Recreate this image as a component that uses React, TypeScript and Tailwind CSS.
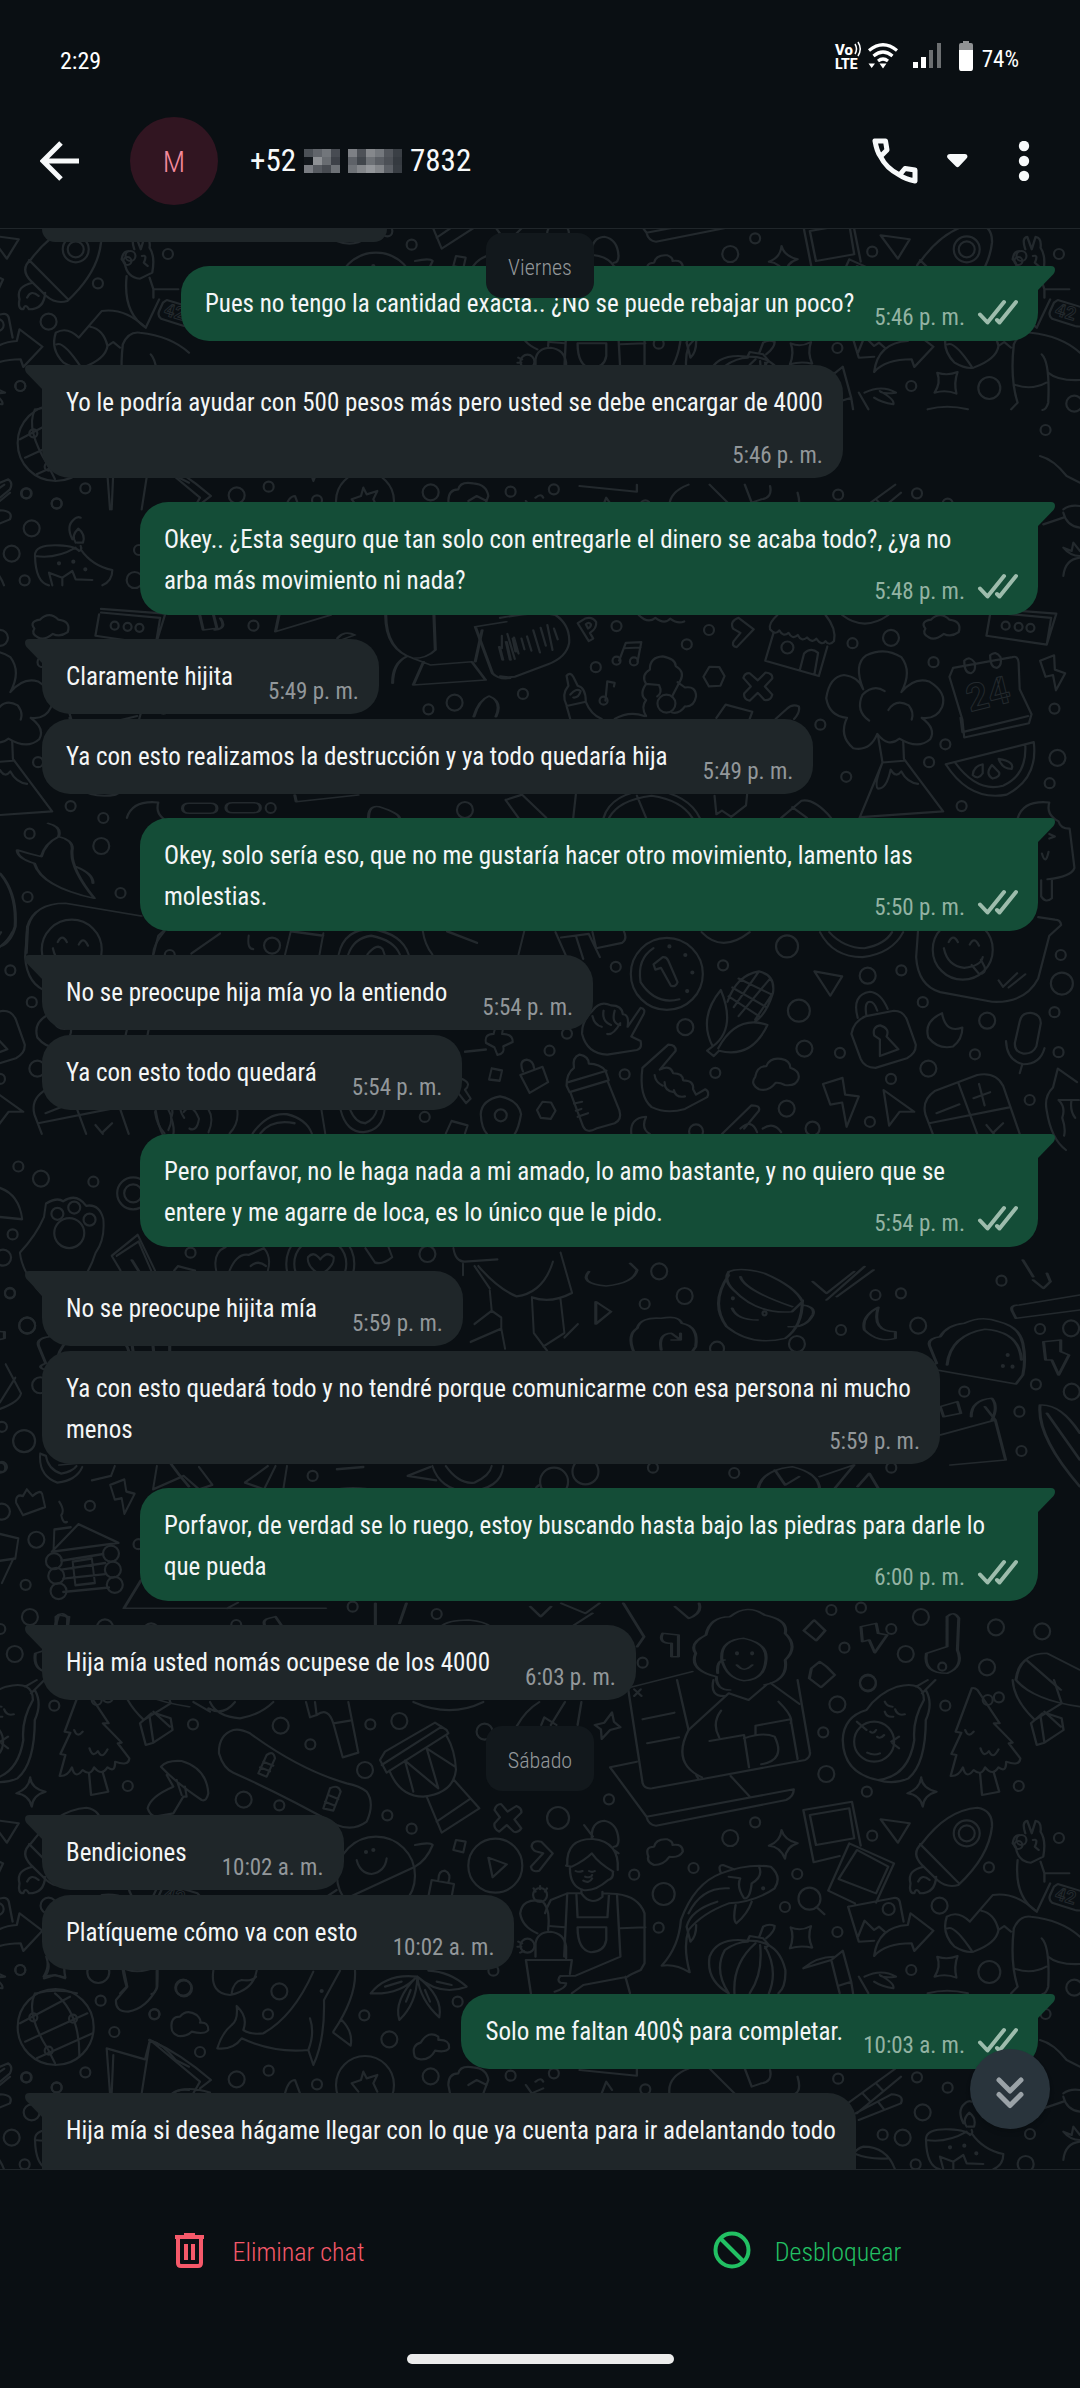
import clsx from 'clsx'

type Message = {
  text: string
  time?: string
  mine?: boolean
  // first message of a run gets the little corner tail
  tail?: boolean
  layout?: 'row' | 'wide' | 'stacked'
}

type Sheet = {
  x: number
  y: number
  sx: number
  sy: number
  paths: string[]
  circles: number[][]
}

const friday: Message[] = [
  { text: 'Pues no tengo la cantidad exacta.. ¿No se puede rebajar un poco?', time: '5:46 p. m.', mine: true, tail: true },
  { text: 'Yo le podría ayudar con 500 pesos más pero usted se debe encargar de 4000', time: '5:46 p. m.', tail: true, layout: 'stacked' },
  { text: 'Okey.. ¿Esta seguro que tan solo con entregarle el dinero se acaba todo?, ¿ya no\narba más movimiento ni nada?', time: '5:48 p. m.', mine: true, tail: true, layout: 'wide' },
  { text: 'Claramente hijita', time: '5:49 p. m.', tail: true },
  { text: 'Ya con esto realizamos la destrucción y ya todo quedaría hija', time: '5:49 p. m.' },
  { text: 'Okey, solo sería eso, que no me gustaría hacer otro movimiento, lamento las\nmolestias.', time: '5:50 p. m.', mine: true, tail: true, layout: 'wide' },
  { text: 'No se preocupe hija mía yo la entiendo', time: '5:54 p. m.', tail: true },
  { text: 'Ya con esto todo quedará', time: '5:54 p. m.' },
  { text: 'Pero porfavor, no le haga nada a mi amado, lo amo bastante, y no quiero que se\nentere y me agarre de loca, es lo único que le pido.', time: '5:54 p. m.', mine: true, tail: true, layout: 'wide' },
  { text: 'No se preocupe hijita mía', time: '5:59 p. m.', tail: true },
  { text: 'Ya con esto quedará todo y no tendré porque comunicarme con esa persona ni mucho\nmenos', time: '5:59 p. m.', layout: 'wide' },
  { text: 'Porfavor, de verdad se lo ruego, estoy buscando hasta bajo las piedras para darle lo\nque pueda', time: '6:00 p. m.', mine: true, tail: true, layout: 'wide' },
  { text: 'Hija mía usted nomás ocupese de los 4000', time: '6:03 p. m.', tail: true },
]

const saturday: Message[] = [
  { text: 'Bendiciones', time: '10:02 a. m.', tail: true },
  { text: 'Platíqueme cómo va con esto', time: '10:02 a. m.' },
  { text: 'Solo me faltan 400$ para completar.', time: '10:03 a. m.', mine: true, tail: true },
  { text: 'Hija mía si desea hágame llegar con lo que ya cuenta para ir adelantando todo', tail: true, layout: 'stacked' },
]

// Wallpaper doodles. Every sheet has its own origin and scale, circles are [x, y, radius].
const sheets: Sheet[] = [
  {
    x: 500, y: 600, sx: 0.3699, sy: 0.35714,
    paths: [
      'M0 50C60 40 110 30 150 42Q190 70 187 120Q180 160 130 180L40 215Q20 218 0 214M5 100V135M20 95l20 70M38 105l12 45M58 108l8 30M73 102l12 40M90 85l18 62M110 78l14 50M128 70l14 70M146 80l10 30',
      'M210 65L240 115L252 108L243 92Q262 80 260 62Q250 45 230 52ZM232 68q8-8 14 0q0 8-8 12z',
      'M322 170L340 120L382 118L372 172M335 135L380 133M285 282L290 228L310 232L308 242',
      'M180 295Q165 265 185 240L180 212Q190 200 198 215L210 240Q232 245 232 285L180 297L190 333M232 285Q245 320 275 333M190 265q15-20 28-10q-5 20-20 18M310 333Q350 310 390 325',
      'M395 235Q380 210 405 195Q405 160 440 158Q475 165 475 185Q500 200 488 225L465 270M395 235L430 238Q440 260 425 270M480 230L500 245Q530 240 530 270Q525 300 500 298Q485 320 465 315M395 235Q375 265 395 280Q380 300 395 325',
      'M566 187L593 188L607 213L596 240L565 242L550 215Z',
      'M675 205L697 225L718 203Q738 205 736 220L716 242L736 265Q732 282 715 280L697 260L675 282Q658 278 660 262L678 242L658 218Q662 204 675 205Z',
      'M640 132Q625 130 632 115L650 92L630 80Q620 60 645 50L686 82ZM585 330L610 293L682 313L675 333M745 333L775 305Q790 290 808 298Q812 315 795 333',
      'M740 90L717 170L862 213L885 130M750 42Q725 65 730 82Q745 100 755 85Q765 105 780 92Q790 112 805 98Q815 118 830 105Q845 122 855 108Q870 130 880 115Q890 130 903 115Q910 80 880 42M810 198L822 150Q840 130 860 148L850 208',
      'M982 250Q955 180 990 155Q1040 130 1085 160Q1115 200 1085 258Q1120 215 1160 228Q1210 260 1195 300Q1180 335 1140 330Q1180 360 1163 390Q1130 420 1080 388Q1050 415 1020 375Q1000 425 955 415Q915 380 938 330Q890 325 882 275Q890 215 930 210Q970 215 982 250M998 338Q960 310 980 265Q1010 235 1040 255M1050 308Q1070 275 1105 295Q1120 315 1113 335',
      'M1022 380L1034 455L972 610M1090 395L1092 445L1198 592L975 608M1034 455L1092 450M1034 455Q1010 520 1022 528Q1045 530 1056 475Q1070 500 1085 480Q1100 510 1130 515',
      'M1225 190L1215 215L1250 335L1255 385L1430 345L1437 320L1405 250L1402 175Q1400 155 1385 160L1225 190M1245 330L1250 370L1428 325M1255 170q15-15 28 5q5 25-10 30q-18 0-18-35M1325 155q15-15 28 5q5 25-10 30q-18 0-18-35',
      'M1460 170L1498 155L1500 195L1528 205L1503 253L1495 210L1475 215Z',
      'M1205 460L1443 398Q1455 500 1370 545Q1270 565 1205 460ZM1230 455Q1290 540 1360 520Q1425 490 1420 405M1305 460q-25 5-27 30q15 15 27-5zM1330 462q-20 25 2 38q22-5 17-18zM1348 445q10 28 35 28q10-20-35-28z',
      'M1150 80Q1135 60 1165 55Q1190 30 1215 55Q1250 60 1240 90Q1220 105 1200 95Q1175 115 1160 105Q1140 95 1150 80',
      'M1325 40L1315 100L1478 125L1504 38L1330 25M1478 125L1490 50L1330 35M925 42Q985 90 1050 42M375 42Q400 68 420 50Q445 70 460 52Q480 68 498 60',
      'M15 560L60 545L125 610M15 560L50 610M205 545L198 610M280 610Q300 540 410 530Q510 545 540 610M295 610Q320 560 410 548Q490 560 520 610M370 548L395 610M580 548L585 600L600 590L625 607L665 575L668 545M760 610L815 562Q850 555 895 610M790 580L830 610',
      'M1400 610Q1415 560 1485 567Q1475 600 1510 620Q1515 640 1540 640L1553 750Q1545 775 1480 782M1463 785V830Q1475 850 1492 835V785M1485 655L1500 662L1485 668M1465 710Q1475 745 1483 705',
      'M1130 927L1125 1000Q1130 1080 1190 1098L1330 1125Q1420 1130 1455 1060L1485 940L1517 910Q1515 895 1500 895L1455 888M1213 958q12-25 25 0M1270 965q12-25 25 3M1200 975Q1210 1025 1255 1030Q1300 1025 1305 1000M1275 1022l20 25q20 0 15-20l-10-20M1348 1065L1360 1083L1398 1045M1375 1085L1420 1048',
      'M415 975Q370 1005 380 1070Q420 1135 485 1118M415 1020L440 1000Q450 998 455 1010L480 1070Q475 1085 462 1080L435 1030L420 1035Z',
      'M150 930L180 1000M165 945L240 935L270 1000M205 940L225 1005M250 930L260 975L330 960Q345 950 335 928M545 930Q600 990 675 930M865 930Q900 1000 980 1000Q1060 990 1090 930M890 930Q930 975 985 975Q1040 965 1060 930',
      'M597 1092Q535 1170 575 1250Q640 1200 597 1092M575 1250L560 1262L578 1277L592 1262M592 1262Q680 1285 723 1190Q640 1160 590 1255M615 1125Q640 1050 700 1040Q745 1050 738 1100Q720 1160 690 1180M645 1060L735 1105M628 1085L720 1140M618 1110L700 1165M700 1040L632 1140M730 1060L645 1165M738 1100L690 1175',
      'M850 1040L925 1054L893 1108ZM1037 1372L1120 1433L1080 1433L1052 1472Z',
      'M990 1165L1065 1150Q1090 1150 1100 1175L1124 1245Q1125 1270 1100 1283L1015 1310Q985 1310 975 1285L950 1215Q955 1180 990 1165ZM967 1170Q950 1105 1000 1097Q1030 1100 1048 1145M990 1160Q985 1125 1000 1125Q1012 1125 1020 1150M1012 1220Q1005 1195 1028 1191Q1055 1200 1045 1222L1077 1258L1027 1277L1027 1230Z',
      'M1195 1157Q1145 1180 1158 1225Q1185 1260 1225 1250Q1250 1230 1250 1197Q1205 1215 1195 1157Z',
      'M1405 1180Q1410 1155 1435 1156Q1462 1160 1462 1185L1450 1250Q1440 1272 1415 1270Q1390 1265 1392 1240ZM1368 1235Q1370 1290 1415 1300Q1460 1300 1472 1255M1412 1300L1405 1325',
      'M250 1150Q270 1120 300 1135Q330 1135 332 1160Q350 1160 345 1195L380 1142Q395 1145 388 1160L355 1222L380 1235Q385 1255 370 1260L290 1273Q235 1270 222 1215Q220 1180 250 1150M250 1165Q255 1190 275 1195M280 1150Q275 1180 300 1190M310 1150Q300 1185 325 1190M290 1215Q305 1220 325 1185',
      'M385 1310L455 1245Q475 1245 475 1262L432 1315Q460 1300 468 1325Q495 1325 495 1345Q525 1345 522 1370L530 1385L555 1370Q568 1378 560 1392L500 1425Q450 1440 410 1420Q375 1390 385 1310M418 1330Q420 1350 440 1360M445 1350Q445 1375 470 1378M470 1372Q475 1395 500 1390',
      'M690 1335Q695 1305 720 1305Q730 1280 760 1285Q785 1290 785 1310Q812 1320 807 1340Q800 1362 770 1358Q755 1350 745 1352Q725 1378 700 1370Q675 1355 690 1335Z',
      'M873 1355L926 1338L933 1385L970 1390L937 1475L925 1407L893 1413Z',
      'M200 1310Q195 1280 215 1273Q240 1278 240 1298Q270 1298 285 1318L294 1345L188 1378L180 1360Q180 1325 200 1310M185 1350L288 1318M190 1378L225 1475Q235 1495 260 1480L310 1465Q330 1455 323 1430L292 1350M200 1410l22-5M205 1430l15-5M210 1447l28-10',
      'M55 1330L115 1307L130 1350L80 1380ZM62 1320Q50 1290 72 1287Q90 1290 92 1310M115 1405L138 1407L150 1430L137 1453L110 1450L100 1428ZM0 1390Q50 1400 57 1440Q50 1480 40 1495M0 1390Q-50 1400 -52 1440Q-50 1480 -35 1495',
      'M1150 1440Q1140 1400 1175 1375L1290 1330Q1340 1320 1360 1360L1405 1495M1150 1440L1170 1495M1240 1355L1290 1495M1160 1465L1380 1420M1180 1437L1242 1412M1280 1395L1325 1378M1295 1355L1310 1415M1335 1490L1360 1465M1315 1470L1335 1495',
      'M1530 1540Q1490 1510 1478 1430Q1470 1390 1495 1365L1508 1312L1560 1350M1510 1400Q1530 1420 1520 1450Q1530 1480 1525 1500M1510 1400L1565 1400M1545 1400Q1540 1430 1555 1450',
      'M355 1495Q350 1450 395 1447Q380 1480 405 1495M600 1495L680 1415Q705 1415 700 1430L660 1480M650 1480Q680 1450 695 1490M710 1480Q740 1460 760 1490',
    ],
    circles: [
      [315, 73, 5], [565, 84, 5], [505, 124, 5], [259, 188, 5], [62, 263, 5], [953, 121, 5], [1172, 174, 5], [866, 349, 5], [1204, 404, 5], [1160, 454, 5], [936, 495, 5], [1499, 304, 5], [1486, 513, 5], [1248, 577, 5],
      [603, 1023, 5], [313, 1027, 5], [181, 1214, 5], [134, 1262, 5], [337, 1328, 5], [582, 1324, 5], [919, 1268, 5], [1085, 1037, 5], [1143, 1126, 5], [1284, 1272, 5], [1057, 1341, 5], [1000, 1461, 5], [1432, 1400, 5], [1499, 1154, 5], [1510, 1266, 5], [1516, 994, 5],
      [1057, 106, 8], [501, 1196, 8], [776, 970, 11], [808, 1150, 11], [823, 1256, 8], [994, 1052, 8], [1317, 1178, 8], [1158, 1312, 8], [775, 1424, 8], [1507, 442, 8], [1519, 1074, 11], [845, 1480, 7], [530, 1488, 7],
      [315, 170, 4], [362, 172, 4], [280, 282, 4], [450, 290, 9], [777, 133, 6], [1367, 72, 4], [1402, 75, 4], [1434, 78, 4], [1251, 979, 30], [451, 1047, 36], [458, 970, 1], [501, 994, 1], [520, 1043, 1], [506, 1095, 1], [2, 1443, 6],
    ],
  },
  {
    x: 480, y: 1680, sx: 0.38265, sy: 0.33333,
    paths: [
      'M55 372L72 395L95 378Q110 385 108 398L90 418L108 445Q100 460 88 455L70 435L50 455Q35 445 38 430L52 412L38 390Q42 372 55 372Z',
      'M345 97L350 125L367 142L340 150L318 177L316 148L300 135L325 128ZM1153 292Q1155 325 1193 335Q1160 345 1157 380Q1150 345 1117 340Q1150 325 1153 292ZM788 450Q795 480 830 490Q800 500 797 536Q785 500 755 497Q785 485 788 450Z',
      'M812 742Q838 755 865 738Q855 770 868 803Q838 795 810 805Q822 770 812 742ZM1195 830Q1222 840 1248 828Q1238 860 1245 893Q1218 880 1188 890Q1205 860 1195 830Z',
      'M385 10L425 310Q430 328 450 325L850 240Q865 230 862 215L830 0M515 0L545 150M565 285L570 295M340 262L410 245M340 262L435 410L820 328M435 410Q440 435 460 437L800 360Q820 350 820 328M655 288L705 350M425 118L508 98M437 190L520 172M403 28L422 48M420 28L403 48',
      'M650 40L545 150Q500 250 580 292M630 92Q605 130 625 172M600 183L690 165L703 262M720 165V137L812 118L830 237M690 175Q740 155 770 170Q800 240 735 253M780 65Q820 110 812 130M610 0Q600 50 640 48M650 40L702 60L748 15M760 10L835 72',
      'M95 140Q120 90 155 66M185 135L222 66M160 135L168 112L200 135M255 135L265 66',
      'M1090 20Q1160 0 1160 60Q1130 120 1135 180Q1120 290 1040 300Q950 280 948 180Q950 110 1010 90Q1040 40 1090 20ZM1165 30Q1185 70 1165 120Q1165 250 1120 295Q1080 315 1040 300M1012 218Q1030 228 1045 220M1020 155q8 8 15-5M1038 170q8 8 18-5M1075 185L1095 170M1078 190L1095 205M985 125L1010 150M1058 65q5 15 20 15M1085 88q5 20 25 15M1058 95q5 18 22 15M1140 20L1170 0M1155 40L1190 0',
      'M1285 25L1243 155L1258 158L1232 222L1245 225L1230 288Q1250 290 1262 262Q1270 300 1290 270Q1310 290 1320 262Q1340 290 1355 262Q1375 280 1375 245Q1410 260 1412 235L1382 190L1392 188L1343 130L1358 130L1300 30Q1292 22 1285 25M1307 282L1312 345L1357 335L1342 275M1268 150q8 25 22 5M1308 205q8 30 22 8q10 28 25-5',
      'M1392 0Q1395 60 1450 120L1520 70L1500 0M1440 130L1455 195L1475 188L1525 150L1520 115L1480 100M1440 130L1470 100M1465 110L1475 188M1475 95L1518 140',
      'M845 390L972 365L995 497M845 390L872 547L940 528M862 405L965 385L978 475L878 495ZM965 490L1082 550L1035 668M965 490L910 632L980 670M985 510L1067 560L1035 640L937 597ZM962 680L1085 653Q1095 655 1097 665L1107 725M962 680L990 785L1030 782M988 770L1005 722L1030 750L1043 740L1058 755',
      'M1125 700L1185 752L1135 813L1128 790Q1060 790 1030 828Q1040 740 1118 735L1125 700ZM1047 418L1123 430L1092 488Z',
      'M1155 490Q1220 390 1300 383Q1340 390 1338 440Q1330 530 1250 615Q1220 625 1195 600L1155 555Q1125 520 1155 490M1150 492L1250 608M1160 560Q1115 570 1125 610Q1120 640 1135 640Q1140 620 1150 640Q1190 640 1192 590M1145 605Q1155 580 1175 600',
      'M1425 460Q1415 425 1430 422L1442 460L1452 422Q1468 425 1465 455Q1480 480 1472 530L1440 548Q1405 545 1400 500L1392 490Q1395 465 1410 465M1445 480Q1460 475 1450 500L1460 510M1405 540Q1395 650 1455 695L1490 610M1465 545L1475 580L1475 605M1475 580L1540 580M1510 612L1590 640Q1600 650 1595 665L1585 685Q1570 695 1555 690L1495 668Q1485 660 1490 645L1500 620Z',
      'M1280 725L1340 645Q1400 635 1455 695M1280 725Q1250 690 1220 710Q1205 760 1240 800Q1270 820 1290 815Q1350 790 1355 750Q1345 700 1310 692M1222 745Q1240 735 1285 812M1355 750L1370 738L1388 755M1395 745Q1410 705 1440 710Q1520 720 1568 770M1395 745Q1385 850 1405 920L1388 940M1485 830Q1510 855 1568 852M1395 865Q1440 885 1480 860M1468 775Q1490 800 1485 920Q1480 940 1470 942',
      'M228 555Q225 475 295 477Q365 485 360 570M225 557L240 560Q275 540 292 520Q310 550 348 575M292 475Q290 425 325 422Q360 430 362 480Q362 500 350 500M272 435L295 470M350 510L362 520M235 565Q235 620 270 630Q300 635 335 600Q350 595 347 575M250 573q8 5 18 0M285 573q8 5 15 0M275 590q15 5 18-5M270 602Q285 612 293 595',
      'M265 632V640L228 640L185 660Q175 680 170 700M228 640L220 830M265 640Q290 680 320 650V635M320 640L358 642Q415 650 430 700V850L420 870Q390 885 385 890L270 915L240 940M252 645L255 712H333L337 645M358 642L367 830L250 887L210 888Q200 900 210 908L225 910Q225 925 195 935M367 745L432 742M180 738L222 742M255 742H330V780Q325 815 290 817Q255 810 255 742M380 890L392 940',
      'M145 830V790Q150 755 185 755Q220 760 225 800V835M120 840H240L235 882M120 840L133 940M178 750Q185 680 160 662Q110 655 105 700Q110 740 150 760M140 625l5 10M157 618v10M175 625l-5 10M100 785l10 5M98 800h10M105 818l10-5M880 682L900 703',
      'M475 857Q520 800 525 720Q560 610 630 580Q700 550 760 560Q790 590 770 625Q720 665 650 670Q580 700 545 750Q530 800 548 877Q510 850 475 857M630 580Q620 555 635 555L665 568M730 562Q740 590 710 610Q705 660 690 655Q670 620 680 595Q650 590 650 590M650 625Q580 620 545 700M620 665Q550 690 540 740L550 785Q565 770 565 735M668 675Q660 720 670 730Q700 700 710 665',
      'M650 940Q590 900 600 830Q620 770 700 782Q780 780 798 870Q800 920 780 940M650 940Q610 870 640 810Q670 785 700 785M665 940Q660 850 720 790M705 940Q740 880 732 795M755 940Q780 870 745 800M700 780L705 768L740 775L755 795L745 805M730 770L740 740Q755 730 770 738Q770 755 748 775',
      'M440 530Q430 500 455 500Q460 475 490 478Q505 485 503 495Q530 490 530 515Q520 535 495 530Q480 555 455 555Q435 545 440 530ZM22 533L70 553L33 592ZM135 500Q135 480 160 485L190 520L155 572Q135 578 133 560L165 520L150 515Q140 515 135 500',
      'M845 865L918 840L948 812L970 905L935 918L918 840M845 865Q880 830 925 830M935 918L940 940M970 905L975 940M990 890L1015 940M1005 890Q1050 865 1087 890Q1050 895 1045 885Q1085 910 1080 925Q1050 920 1030 905M1170 940Q1220 925 1275 940',
      'M495 1240Q490 1190 545 1166M600 1166L665 1240M692 1166L710 1220L735 1210M758 1170Q765 1205 735 1210M830 1190Q840 1230 825 1240M955 1275L1085 1166M985 1300L1100 1190M1000 1240l20 25M1035 1210l18 22M965 1310L1075 1243Q1110 1245 1100 1270L990 1320M1040 1265l15 22M260 1170L410 1187V1166M318 1240L330 1205L345 1230M120 1215L135 1240L165 1225M145 1205Q160 1190 165 1205',
    ],
    circles: [
      [897, 157, 5], [1216, 77, 5], [1356, 52, 5], [1011, 335, 5], [337, 358, 5], [719, 427, 5], [403, 584, 5], [558, 564, 5], [829, 582, 5], [797, 681, 5], [467, 743, 5], [1025, 467, 5], [934, 756, 5], [1127, 870, 5], [35, 872, 5], [1408, 318, 5], [1330, 562, 5], [1513, 474, 5], [80, 1187, 5], [193, 1180, 5], [432, 1228, 5], [936, 1196, 5], [1478, 1002, 5],
      [934, 73, 8], [905, 282, 8], [204, 414, 11], [654, 474, 8], [480, 642, 11], [1201, 677, 8], [1331, 876, 11], [1553, 923, 8], [1014, 10, 8], [1068, 687, 6], [1030, 185, 20], [1272, 460, 13], [1272, 460, 8], [1415, 480, 5], [1407, 495, 4], [157, 645, 7], [124, 797, 7], [861, 656, 11], [40, 557, 27], [740, 625, 1], [12, 155, 8],
    ],
  },
  {
    x: 0, y: 1680, sx: 0.33333, sy: 0.33333,
    paths: [
      'M483 260Q500 240 545 243Q620 265 625 340Q620 365 605 360Q530 310 483 260M500 285L520 320Q450 350 443 385Q450 405 465 410L520 400L550 350L560 350L555 320M530 300L545 345',
      'M700 150Q655 165 657 220Q670 265 700 278Q860 350 1010 435Q1060 455 1100 425Q1125 370 1100 335Q1080 318 1040 310Q900 270 750 160Q720 145 700 150ZM775 280L800 225Q820 210 825 235L800 290ZM790 245l30 12M780 262l30 12M970 385L990 325Q1015 312 1022 335L1000 392ZM985 345l30 12M975 365l30 12',
      'M918 66L930 112L950 105L945 66M950 105Q985 80 1000 130L1028 232L1075 218L1045 66M1000 130L1050 122M580 66L630 95M630 66Q650 110 720 115Q780 105 820 66M625 85Q670 110 705 66M1240 66Q1350 115 1450 66',
      'M1140 240L1155 215L1305 128L1340 150L1345 160L1160 278ZM1145 255L1325 140M1168 272Q1200 350 1270 350Q1360 340 1368 270Q1365 210 1340 168M1215 242L1240 335M1215 242L1315 325L1280 205L1365 260M1280 350L1325 458L1438 385L1362 300M1310 425L1408 358',
      'M1245 495Q1290 485 1298 495Q1280 540 1245 560L1050 650M1010 630L980 650M1070 540Q1080 580 1115 582Q1155 575 1160 535M1368 480L1397 485L1390 517L1360 510ZM1285 650L1295 600L1362 612L1355 650M1315 600Q1315 572 1335 572Q1355 580 1345 608',
      'M60 1030L210 950M75 1085L262 1000M110 1135L278 1060M105 940Q75 1000 145 1110L165 1150M165 940Q240 1000 238 1130',
      'M372 872L382 920L348 960Q345 995 385 995Q440 985 470 925V872M132 895Q150 870 145 850M132 895L165 885L195 895M640 872Q630 940 690 945Q760 930 770 872M695 940Q700 905 725 900Q755 905 768 890',
      'M940 875Q880 1010 790 1060Q750 1065 730 1050Q745 1010 710 978Q715 1020 695 1035Q665 1060 652 1105Q700 1110 725 1075Q820 1120 925 1110M930 1015Q945 1060 925 1110L940 1155Q975 1080 972 960L1020 872M1065 872Q1070 950 1000 1055M1025 1020Q1060 1055 1052 1097L1000 1058',
      'M515 1045Q510 1010 540 1010Q560 985 590 1005Q605 1020 600 1028Q625 1025 625 1050Q615 1065 575 1055Q560 1070 535 1068Q515 1060 515 1045ZM1243 1125Q1235 1095 1262 1088Q1285 1050 1315 1070V1080Q1350 1078 1347 1105Q1340 1118 1305 1112Q1290 1140 1262 1138Q1243 1135 1243 1125Z',
      'M1250 890Q1160 880 1112 940Q1200 945 1250 890Q1180 960 1198 1020Q1250 970 1252 890Q1260 960 1318 1012Q1330 950 1252 890Q1320 950 1400 920Q1350 875 1285 872M1155 920L1205 905M1218 965L1232 930M1290 965L1275 930M1310 905L1355 915',
      'M320 1105L330 1240M320 1105L435 1138L450 1080L425 1240M340 1125L335 1240M450 1080L600 1205L580 1240M450 1080Q540 1120 633 1200L600 1225M518 1240Q560 1215 630 1238M1090 1175L1100 1195L1132 1185L1120 1210L1132 1235M1090 1175L1083 1200L1055 1210L1075 1235',
      'M1345 1215Q1345 1180 1375 1180Q1380 1155 1420 1162Q1460 1165 1465 1200L1450 1240M1350 1240L1345 1215M1405 1215L1430 1200L1460 1215M855 1240Q865 1200 885 1200L900 1240M0 1160L25 1150Q40 1160 30 1180L0 1205',
    ],
    circles: [
      [579, 133, 5], [931, 193, 5], [1111, 133, 5], [838, 376, 5], [1162, 406, 5], [1235, 446, 5], [302, 962, 5], [463, 1003, 5], [343, 1056, 5], [256, 1177, 5], [170, 1222, 5], [80, 1192, 5], [600, 1116, 5], [804, 1003, 5], [806, 1172, 5], [1093, 1006, 5], [1373, 965, 5], [951, 1213, 5], [61, 870, 5],
      [842, 137, 8], [1095, 270, 8], [731, 359, 8], [1198, 123, 8], [552, 925, 8], [838, 934, 8], [1168, 1078, 8], [710, 1198, 8], [1292, 1189, 8], [1128, 587, 39], [1098, 516, 1], [1120, 510, 1], [167, 1041, 38], [100, 1012, 4], [219, 1016, 4], [146, 1112, 4], [965, 933, 1], [1095, 1215, 29],
    ],
  },
  {
    x: 0, y: 900, sx: 0.38265, sy: 0.44643,
    paths: [
      'M1285 377L1312 382L1306 405L1278 402ZM1270 320Q1265 300 1290 300Q1295 275 1315 285L1312 300Q1340 300 1340 318L1315 328Q1320 345 1300 347L1292 330Z',
      'M430 70Q400 100 400 122M500 120L575 75M650 80q-5 30 12 30M760 70L745 122M845 75L835 122M760 70L845 80M885 122Q900 65 970 65Q1050 75 1068 122M910 122Q925 85 970 80Q1030 90 1045 122M960 122Q985 95 1000 110L1005 122M1105 70Q1110 100 1130 122M1168 70L1247 96M1370 70L1355 122',
      'M405 475Q410 505 430 523M440 470Q455 490 440 515M480 475Q500 450 520 490Q515 520 495 512M545 470Q560 490 545 520M620 470Q625 500 600 523M660 523Q700 475 750 480Q800 490 815 523M680 523Q710 490 770 500M840 470L850 523M890 470Q905 520 950 520Q1000 515 1005 470M915 470Q930 500 955 500Q980 490 985 470M1165 523L1180 495L1222 505L1215 523M1215 340L1270 335M1205 400q30 10 10 25l15 20l-12 10l-18-20',
      'M115 710Q95 750 52 790Q60 850 146 914Q225 860 250 790M115 710L120 680Q150 665 165 675Q200 655 225 685Q260 680 270 715Q275 760 250 790',
      'M0 645Q50 660 58 715L0 710M292 797L360 750L405 830M305 797L362 765L395 830M292 797L315 830',
      'M565 830Q555 790 590 777M600 830Q620 790 650 795L690 780Q710 800 700 830M655 820q20-15 40 0M455 830L465 820L510 830M837 840Q800 820 805 800Q820 785 837 805Q855 785 872 800Q875 820 837 840M955 780L980 812Q1000 818 1025 800L1015 777',
      'M1185 780Q1190 810 1215 810L1300 805M1210 815L1210 840M1250 820Q1300 870 1350 888Q1420 880 1445 810M1240 820L1280 870M1465 790L1495 880Q1440 905 1390 890L1395 970L1430 1010M1465 895L1475 970L1420 1000M1280 875L1285 920L1240 950M1285 920L1310 935L1310 960L1230 990M1310 960L1320 1005M1510 950L1475 980',
      'M15 1040L55 1105Q50 1125 0 1140M0 1125L40 1070M105 1240Q100 1290 150 1305Q200 1300 215 1270M105 1240L120 1245Q125 1275 160 1285Q190 1280 200 1268M240 1300L290 1290L300 1268',
      'M410 1268L400 1320L480 1290M480 1290L520 1320L555 1310L520 1270M640 1305L700 1268M640 1305L690 1320L720 1268M750 1268L740 1322M880 1275L950 1270M1065 1290L1125 1270M1065 1290L1140 1300M1130 1268Q1150 1320 1220 1325Q1310 1320 1315 1268M1165 1268Q1200 1310 1240 1305Q1280 1290 1285 1268M1410 1310q-20 10 0 15M860 1325Q920 1310 990 1325',
      'M288 1310L325 1298L330 1325L352 1330L325 1375L318 1340L300 1343ZM42 1350Q40 1330 60 1335L70 1320L85 1335Q105 1320 110 1330L118 1360L60 1378Z',
      'M205 1398L135 1460L310 1440ZM140 1455L142 1410L185 1405M155 1348q15 20 5 30q5 20 15 15M160 1480L270 1465M160 1500L275 1485M165 1520L275 1510M165 1550L285 1540M190 1482L240 1475L248 1530L197 1535ZM0 1420L48 1430L40 1475L0 1480M35 1475L5 1530',
    ],
    circles: [
      [711, 102, 8], [1110, 486, 5], [48, 597, 5], [107, 624, 8], [244, 631, 5], [33, 749, 5], [8, 801, 8], [26, 880, 5], [71, 953, 8], [348, 657, 16], [348, 657, 9], [150, 703, 6], [194, 689, 6], [234, 716, 6], [181, 746, 15],
      [498, 790, 5], [837, 815, 34], [837, 815, 26], [1117, 793, 8], [105, 1087, 8], [5, 1180, 5], [63, 1212, 11], [5, 1270, 5], [817, 1290, 5], [1448, 1303, 14], [1530, 1280, 13], [235, 1357, 5], [95, 1433, 8], [362, 1443, 5], [67, 1534, 5], [5, 1370, 8],
      [141, 1481, 8], [147, 1514, 8], [153, 1548, 8], [290, 1464, 8], [295, 1500, 8], [300, 1534, 8],
    ],
  },
  {
    x: 0, y: 340, sx: 0.68878, sy: 0.33333,
    paths: [
      'M290 825L295 870L315 865L310 825M320 835q10 30-8 35M400 875L480 825M405 825L400 875M560 825Q560 930 600 955Q620 955 632 930L630 825M600 955L625 975L685 965L705 1020L600 1035L615 965M570 1030Q570 970 590 950M490 895Q500 870 515 885L495 900M700 870L690 965',
      'M690 860L735 845M690 860L715 1000Q725 1020 740 1015M725 920l5 40M735 905l6 55M745 895l4 40M688 1130Q695 1080 710 1068Q730 1085 720 1130',
      'M275 1390h30q10 0 10 15t-10 15h-30q-10 0-10-15t10-15M338 1388h30q10 0 10 15t-10 15h-30q-10 0-10-15t10-15M430 1385L520 1365M430 1385L428 1365M535 1435Q535 1395 550 1400Q580 1420 580 1435',
    ],
    circles: [[368, 857, 5], [622, 1108, 5], [660, 1088, 8], [393, 1404, 5], [675, 1410, 8]],
  },
  {
    x: 0, y: 800, sx: 0.68878, sy: 0.33333,
    paths: [
      'M70 70Q90 80 85 110Q105 120 105 145Q100 200 137 295Q60 260 50 190Q25 175 25 150Q40 160 60 170Q65 130 85 110M110 200Q135 220 135 250M0 220Q25 280 22 380Q15 430 0 440M38 460L40 380Q50 310 95 310L205 348',
    ],
    circles: [[43, 101, 5], [150, 54, 5], [147, 138, 8], [175, 279, 5], [40, 291, 5]],
  },
  {
    x: 0, y: 1260, sx: 0.68878, sy: 0.33333,
    paths: [
      'M855 35Q840 70 880 78Q920 70 925 30L915 10M865 125L887 155L865 192Z',
      'M1058 35Q1075 20 1110 40Q1155 80 1165 125L1150 155Q1100 165 1065 90Q1050 60 1058 35M1058 45Q1030 130 1055 200Q1090 260 1140 235Q1165 200 1165 120M1165 135Q1185 140 1180 165Q1170 205 1145 200M1063 145Q1070 180 1100 180M1075 50Q1080 90 1150 140',
      'M1180 65L1200 100L1240 35M1215 110L1268 30M1200 120L1255 20M1275 142Q1250 170 1255 210Q1275 250 1300 235V215Q1265 215 1275 142Z',
      'M1485 0L1500 50M1500 60L1515 85L1525 65L1520 40M1470 155Q1465 135 1480 135L1568 105M1475 175L1568 150M1470 155L1475 175',
      'M1360 330Q1345 320 1360 310L1350 260Q1345 235 1365 230Q1375 195 1400 190Q1425 165 1450 185Q1480 200 1485 250Q1490 300 1485 345L1475 372L1360 330M1375 315Q1380 225 1430 208Q1480 215 1483 300M1515 245L1540 240V275L1552 285L1537 345L1527 300L1518 300Z',
      'M920 275Q910 225 925 205Q930 170 960 175Q985 165 990 190Q1015 200 1010 260L1005 275M960 270Q955 220 975 220L988 240M988 220V240H975',
      'M1365 525L1445 480L1460 600L1380 615M1445 480L1430 440M1365 440L1390 425L1395 460L1370 470ZM1410 470Q1410 420 1440 415Q1450 440 1440 480M1510 435Q1540 430 1568 520M1510 435Q1505 530 1568 680M1520 460L1568 600',
      'M1100 690Q1105 630 1150 620Q1190 640 1190 690M1125 630L1140 675L1160 650M1190 650L1240 615L1210 690M1245 680L1262 640L1275 685',
      'M180 1045L473 1045M180 1045L205 960M330 1045L345 1028M545 1100V1030M580 1090L590 1030M640 1100Q650 1080 680 1080Q705 1085 712 1100M770 1040L785 1070L800 1040M815 1030L850 1060L870 1030M830 1100L860 1060M905 1030L920 1080L935 1130L925 1160M980 1040L1000 1075Q1020 1060 1015 1030M80 1100L85 1065L100 1070L98 1100M385 1100Q380 1080 390 1075L400 1070L410 1100',
      'M1375 1070Q1385 1050 1392 1075L1390 1170Q1400 1220 1375 1240Q1340 1240 1345 1180L1375 1160ZM1182 1080L1198 1112L1185 1142L1167 1112ZM1250 1100L1272 1090L1275 1120L1288 1125L1270 1178L1262 1140L1252 1145ZM1178 1225L1190 1205L1200 1220L1212 1245L1192 1282L1175 1255Z',
      'M1010 1180Q1000 1150 1025 1125Q1030 1070 1060 1070Q1085 1030 1110 1065Q1145 1080 1140 1120Q1160 1160 1140 1200Q1145 1260 1110 1275M1010 1180Q1000 1230 1040 1250Q1040 1290 1060 1290M1048 1200Q1045 1140 1080 1135Q1115 1150 1112 1200Q1110 1260 1080 1262Q1055 1255 1048 1200ZM1070 1215q10 25 22 0M1052 1200Q1040 1200 1042 1240M915 1282L1005 1235',
      'M962 1120L985 1125L985 1190L975 1190L975 1150Q955 1150 962 1120M1475 1260Q1480 1180 1520 1180L1568 1230M1490 1200L1540 1290M1475 1260Q1500 1320 1568 1340',
    ],
    circles: [
      [957, 34, 8], [994, 108, 8], [936, 132, 5], [1041, 266, 7], [1157, 252, 8], [1064, 115, 1], [1110, 160, 2], [1271, 105, 5], [1308, 100, 5], [1221, 210, 5], [1333, 197, 8], [1454, 62, 5], [1480, 455, 5], [1510, 207, 5], [1555, 205, 8], [1504, 373, 5], [1556, 395, 8], [1400, 395, 5], [1483, 573, 5],
      [1463, 285, 1], [1456, 318, 1], [1470, 320, 1], [948, 623, 5], [1066, 639, 5], [1294, 623, 5], [512, 1040, 5], [634, 1062, 5], [1337, 1071, 8], [1294, 1107, 5], [1226, 1163, 5], [1207, 1050, 5], [1250, 1043, 5], [1446, 1102, 8], [1513, 1114, 8], [1315, 1182, 8], [1260, 1268, 8], [1433, 1222, 8], [1434, 1320, 5], [933, 1208, 5], [343, 1095, 5], [1368, 1220, 4], [1070, 1180, 1], [1092, 1180, 1],
    ],
  },
  {
    x: 840, y: 1960, sx: 0.33333, sy: 0.33333,
    paths: [
      'M258 540Q255 505 330 508Q380 510 390 525Q400 520 395 510M258 540Q320 550 380 515M258 540Q260 620 300 628M490 582Q490 615 460 628M490 582Q430 570 395 520M370 490Q350 450 375 430Q385 420 395 425M380 500Q365 480 388 458Q410 475 402 500L385 500M300 590L340 605L370 585L380 610L430 612M300 590L310 628M340 605V628',
      'M35 628Q30 570 70 560Q140 560 165 628M40 580Q90 600 145 595M670 400Q690 385 720 390M670 410Q680 450 720 455M610 445L670 425M720 525L700 500L695 525L670 515Q690 540 720 540M670 600Q675 550 720 545M600 240Q640 250 680 300L720 320',
    ],
    circles: [[231, 352, 5], [323, 383, 5], [248, 457, 8], [128, 524, 5], [188, 533, 8], [227, 613, 5], [570, 522, 5], [557, 612, 8], [330, 562, 1], [373, 557, 1], [409, 580, 1]],
  },
]

const Wallpaper = () => (
  <svg className="absolute inset-0 h-full w-full" fill="none" stroke="#23292d" strokeWidth="2.200" strokeLinecap="round" strokeLinejoin="round" aria-hidden="true">
    <defs>
      <g id="doodles">
        {sheets.map((sheet, i) => (
          <g key={i}>
            <g transform={`translate(${sheet.x} ${sheet.y}) scale(${sheet.sx} ${sheet.sy})`} strokeWidth={2.2 / Math.sqrt(sheet.sx * sheet.sy)}>
              {sheet.paths.map((d, j) => (
                <path key={j} d={d} />
              ))}
            </g>
            {sheet.circles.map(([cx, cy, r], j) => (
              <circle key={j} cx={sheet.x + cx * sheet.sx} cy={sheet.y + cy * sheet.sy} r={r} />
            ))}
          </g>
        ))}
        <g fontFamily="Roboto" fontWeight="700">
          <text x="970" y="712" fontSize="38" strokeWidth="1" transform="rotate(-14 970 712)">24</text>
          <text x="1054" y="1899" fontSize="18" strokeWidth="1" transform="rotate(16 1054 1899)">42</text>
        </g>
      </g>
    </defs>
    {/* one tile is 891 x 1584, laid out from the top of the screen */}
    <g transform="translate(0 -229)">
      <use href="#doodles" />
      <use href="#doodles" x="-891" />
      <use href="#doodles" y="-1584" />
      <use href="#doodles" x="-891" y="-1584" />
    </g>
  </svg>
)

const Ticks = () => (
  <svg className="mb-1.5 h-[26px] w-[41px] shrink-0" viewBox="0 0 41 26" fill="none" stroke="#9dbcac" strokeWidth="4" strokeLinecap="round" strokeLinejoin="round">
    <path d="M3 15.5L10.5 23.5L27 3M20 21L22.500 23.500L39 3" />
  </svg>
)

const Tail = ({ mine }: { mine?: boolean }) => (
  <svg className={clsx('h-6 w-[18px] shrink-0', mine ? 'fill-[#144d37]' : '-scale-x-100 fill-[#1f2629]')} viewBox="0 0 18 24">
    <path d="M0 0H13Q17 0 17 4Q17 6 15.500 8L0 24Z" />
  </svg>
)

const Bubble = ({ text, time, mine, tail, layout = 'row' }: Message) => {
  const lines = text.split('\n')
  const last = lines.pop()

  return (
    <li className={clsx('flex items-start', mine && 'flex-row-reverse', tail ? 'mt-6' : 'mt-[5px]')}>
      {tail ? <Tail mine={mine} /> : <span className="w-[18px] shrink-0" />}
      <div
        className={clsx(
          'min-h-[75px] rounded-[28px] pt-[17px] pr-5 pb-2.5 pl-6 text-[25px] leading-[41px] text-[#f4f6f7]',
          mine ? 'bg-[#144d37]' : 'bg-[#1f2629]',
          tail && (mine ? 'rounded-tr-none' : 'rounded-tl-none'),
          layout === 'row' && 'flex',
          layout === 'wide' && 'w-full max-w-[898px]',
          layout === 'stacked' && 'flex min-h-[113px]',
        )}
      >
        {lines.map((line) => (
          <p key={line}>{line}</p>
        ))}
        <div className={clsx('flex flex-1 justify-between', layout === 'stacked' ? 'flex-col' : mine ? 'gap-5' : 'gap-[35px]')}>
          <p className="mb-1">{last}</p>
          {time && (
            <div className="flex items-end gap-3 self-end">
              <time className={clsx('text-[23px] leading-6 whitespace-nowrap', mine ? 'mb-px text-[#93b3a3]' : 'text-[#92979a]')}>{time}</time>
              {mine && <Ticks />}
            </div>
          )}
        </div>
      </div>
    </li>
  )
}

const DayChip = ({ children }: { children: string }) => (
  <span className="flex h-[65px] items-center rounded-2xl bg-[#12181c] px-[22px] pt-1 text-[22px] font-light text-[#92979a]">{children}</span>
)

const mosaic = [
  ['#4c5157', '#61656b', '#72767b', '#474b52', '#12171c', '#8d9094', '#686c71', '#3d4148', '#797c82', '#565a60', '#474b51', '#6d7176'],
  ['#7d8085', '#4d5157', '#85888c', '#74787d', '#52565c', '#3a3f45', '#5e6268', '#41464c', '#6d7176', '#5b5f65', '#4c5056', '#353a40', '#6e7277', '#83868a', '#93969a', '#83868a', '#5b5f65', '#383d43'],
]

const Mosaic = ({ cells, columns }: { cells: string[]; columns: number }) => (
  <svg className="h-6" viewBox={`0 0 ${columns * 9} 24`} shapeRendering="crispEdges" aria-hidden="true">
    {cells.map((c, i) => (
      <rect key={i} x={(i % columns) * 9} y={Math.floor(i / columns) * 8} width="9" height="8" fill={c} />
    ))}
  </svg>
)

const StatusBar = () => (
  <div className="flex h-20 items-end justify-between pr-[61px] pb-[3px] pl-[60px] text-white">
    <span className="text-2xl">2:29</span>
    <div className="flex items-center">
      <svg className="h-8 w-7 overflow-visible" viewBox="0 0 28 32" fill="#fff" fontFamily="Roboto" fontWeight="800">
        <text x="-2" y="15" fontSize="15">Vo</text>
        <text x="-2" y="29" fontSize="14">LTE</text>
        <path d="M18 4Q21 9 18 14M21 2Q25.500 9 21 16" fill="none" stroke="#fff" strokeWidth="1.500" />
      </svg>
      <svg className="ml-0.5 h-7 w-8" viewBox="0 0 32 28" fill="none" stroke="#fff" strokeWidth="3.200">
        <path d="M2 8.500Q16 -3 30 8.500M6.500 14Q16 6 25.500 14M11 19Q16 15 21 19" />
        <path d="M12.500 21.500H19.500L16 26.500ZM1.500 21.500H8L4.700 26Z" fill="#fff" stroke="none" />
      </svg>
      <svg className="ml-3.5 h-7 w-[29px]" viewBox="0 0 29 28" fill="#fff">
        <path d="M0 20h5v6H0zM8 15h5v11H8z" />
        <path d="M16 8h4v18h-4zM24 1h4v25h-4z" opacity=".4" />
      </svg>
      <svg className="ml-4 h-8 w-4" viewBox="0 0 16 32" fill="#fff">
        <path d="M5 1h6v2h2q2 0 2 2v6H1V5q0-2 2-2h2z" opacity=".55" />
        <path d="M1 10h14v18q0 3-2 3H3q-2 0-2-3z" />
      </svg>
      <span className="ml-2 pt-2 text-[23px]">74%</span>
    </div>
  </div>
)

const Header = () => (
  <header className="border-b border-[#20262a]">
    <StatusBar />
    <div className="flex h-[148px] items-center pt-3.5 pr-12 pl-10 text-[#f7f9fa]">
      <button type="button" aria-label="Atrás">
        <svg className="h-10 w-10" viewBox="0 0 40 40" fill="none" stroke="currentColor" strokeWidth="5">
          <path d="M39 20H4M21 2L3 20L21 38" />
        </svg>
      </button>
      <span className="ml-[50px] flex h-[88px] w-[88px] items-center justify-center rounded-full bg-[#311521] text-[30px] font-light text-[#f58a9d]">M</span>
      <h1 className="ml-8 flex items-center gap-2 text-[31px]">
        <span>+52</span>
        <Mosaic cells={mosaic[0]} columns={4} />
        <Mosaic cells={mosaic[1]} columns={6} />
        <span>7832</span>
      </h1>
      <button type="button" aria-label="Llamar" className="ml-auto flex items-center gap-[29px]">
        <svg className="h-[46px] w-[46px]" viewBox="0 0 46 46" fill="none" stroke="currentColor" strokeWidth="5" strokeLinejoin="round">
          <path d="M3 3H13.500L15 12L8.500 18.500Q5 14 3 3ZM43 43V32L33 30.500L27.500 37Q33 41 43 43ZM8.500 18.500Q14 30 27.500 37" />
        </svg>
        <svg className="h-[14px] w-[21px]" viewBox="0 0 21 14" fill="currentColor">
          <path d="M3 0H18Q20 0 20.500 2Q20.500 4 19 5L12 12.500Q10.500 14 9 12.500L1.500 5Q0 4 0 2Q.5 0 3 0Z" />
        </svg>
      </button>
      <button type="button" aria-label="Más opciones" className="ml-12">
        <svg className="h-10 w-4" viewBox="0 0 16 40" fill="currentColor">
          <circle cx="8" cy="5" r="5.200" />
          <circle cx="8" cy="20" r="5.200" />
          <circle cx="8" cy="35" r="5.200" />
        </svg>
      </button>
    </div>
  </header>
)

const Footer = () => (
  <footer className="border-t border-[#20262a]">
    <div className="grid grid-cols-2 pt-10 pr-1 text-[26px] font-light">
      <button type="button" className="flex h-20 items-center justify-center gap-7 text-[#f6596a]">
        <svg className="h-[37px] w-[31px]" viewBox="0 0 31 37" fill="none" stroke="currentColor" strokeWidth="4" strokeLinejoin="round">
          <path d="M1 5H30M10 3H21M4 6V31Q4 34 7 34H24Q27 34 27 31V6M12 12V28M19 12V28" />
        </svg>
        <span className="pt-1">Eliminar chat</span>
      </button>
      <button type="button" className="flex h-20 items-center justify-center gap-6 text-[#22c063]">
        <svg className="h-[38px] w-[38px]" viewBox="0 0 38 38" fill="none" stroke="currentColor" strokeWidth="4">
          <circle cx="19" cy="19" r="16.500" />
          <path d="M7.500 7.500L30.500 30.500" />
        </svg>
        <span className="pt-1">Desbloquear</span>
      </button>
    </div>
    <div className="mx-auto mt-16 mb-6 h-2.5 w-[267px] rounded-full bg-[#ececec]" />
  </footer>
)

export default function App() {
  return (
    <div className="flex h-screen flex-col overflow-hidden bg-[#0a0f13] [font-family:'Roboto_Condensed',Roboto,sans-serif]">
      <Header />
      <main className="relative min-h-0 flex-1 overflow-hidden">
        <Wallpaper />
        <div className="relative px-6">
          <div className="ml-[18px] h-[13px] w-[345px] rounded-b-[28px] bg-[#1f2629]" />
          <ul>
            {friday.map((m, i) => (
              <Bubble key={i} {...m} />
            ))}
          </ul>
          <div className="mt-[26px] flex justify-center">
            <DayChip>Sábado</DayChip>
          </div>
          <ul>
            {saturday.map((m, i) => (
              <Bubble key={i} {...m} />
            ))}
          </ul>
        </div>
        {/* sticky day label over the list */}
        <div className="absolute inset-x-0 top-1 flex justify-center">
          <DayChip>Viernes</DayChip>
        </div>
        <button type="button" aria-label="Ir al final" className="absolute right-[30px] bottom-10 flex h-20 w-20 items-center justify-center rounded-full bg-[#29343c] shadow-md">
          <svg className="mt-2 h-8 w-7" viewBox="0 0 28 32" fill="none" stroke="#9aa2a7" strokeWidth="5" strokeLinecap="round" strokeLinejoin="round">
            <path d="M3 3L14 14L25 3M3 17.500L14 28.500L25 17.500" />
          </svg>
        </button>
      </main>
      <Footer />
    </div>
  )
}
